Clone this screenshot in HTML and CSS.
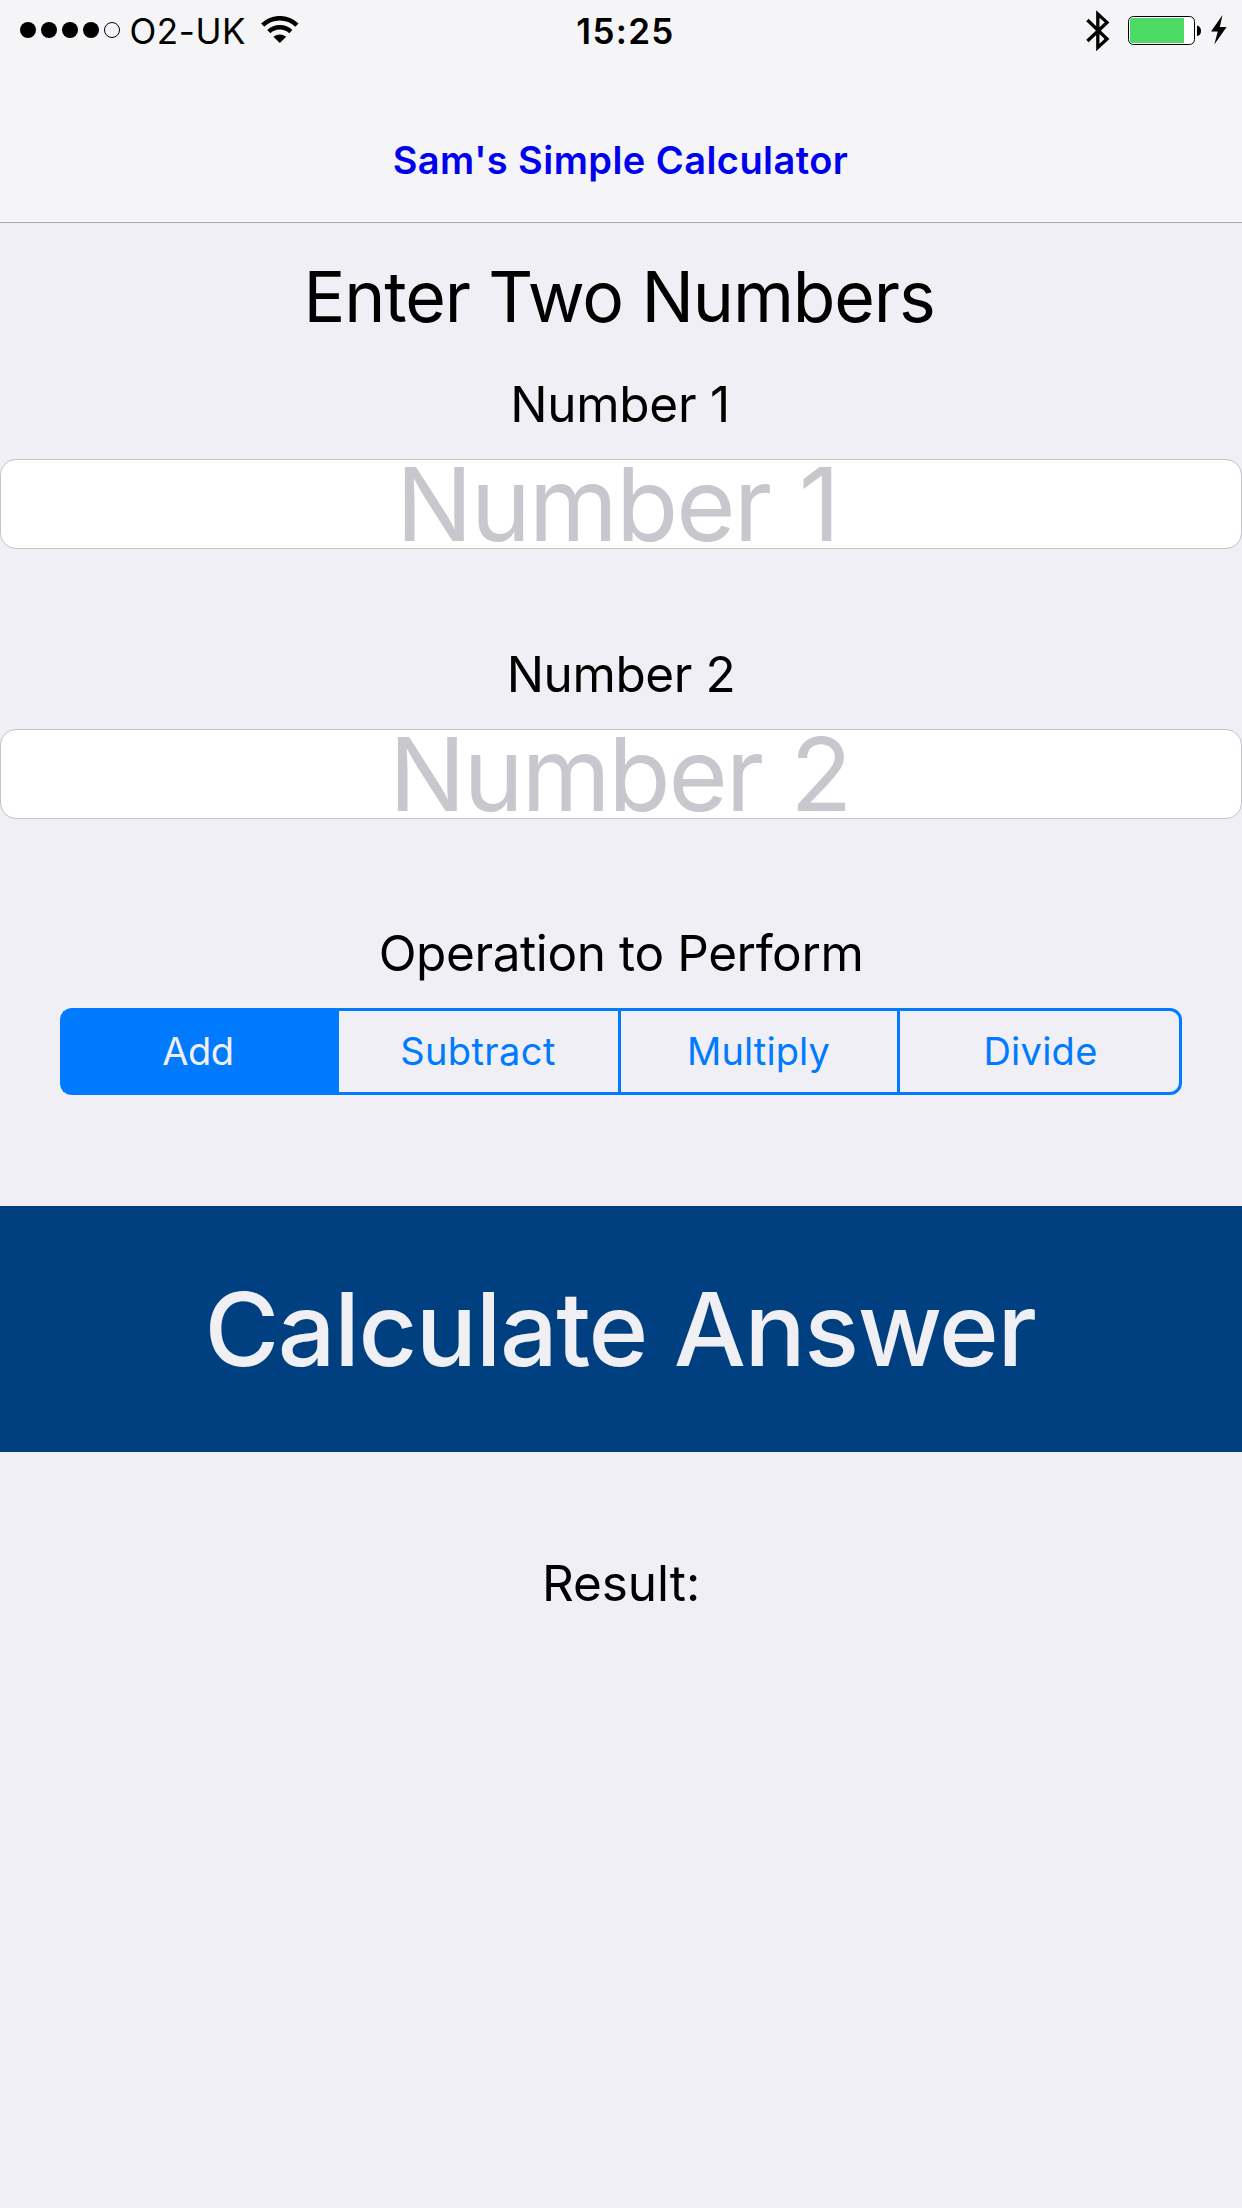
FILE: index.html
```html
<!DOCTYPE html>
<html lang="en">
<head>
  <meta charset="utf-8">
  <title>Sam's Simple Calculator</title>
  <link rel="stylesheet" href="styles.css">
</head>
<body>
  <header class="top">
    <div class="status">
      <div class="status-left">
        <span class="signal"><i></i><i></i><i></i><i></i><i class="off"></i></span>
        <span class="carrier">O2-UK</span>
        <svg class="wifi" width="38" height="28" viewBox="0 0 38 28">
          <path d="M1.700 9.200A24.500 24.500 0 0 1 35.900 9.200" fill="none" stroke="#000" stroke-width="4.600"/>
          <path d="M7.800 15.600A16 16 0 0 1 29.800 15.600" fill="none" stroke="#000" stroke-width="4.600"/>
          <path d="M18.800 27L12.400 20.700Q18.800 16.200 25.200 20.700Z"/>
        </svg>
      </div>
      <div class="time">15:25</div>
      <div class="status-right">
        <svg class="bluetooth" width="24" height="42" viewBox="0 0 24 42">
          <path d="M1.400 10L21 29L11.800 37.400V4L21 12.400L1.400 31" fill="none" stroke="#000" stroke-width="3.300"/>
        </svg>
        <svg class="battery" width="74" height="30" viewBox="0 0 74 30">
          <rect x=".5" y=".5" width="66" height="28" rx="5" fill="#fff" stroke="#000"/>
          <path d="M4.500 2H56V27H4.500Q2 27 2 24.500V4.500Q2 2 4.500 2Z" fill="#4cd964"/>
          <path d="M69 9.500Q73 10.500 73 15T69 20Z"/>
        </svg>
        <svg class="bolt" width="16" height="30" viewBox="0 0 16 30">
          <path d="M11.500 0L0 16.500H6.800L3.300 29.500L15.600 12H8.800Z"/>
        </svg>
      </div>
    </div>
    <h1 class="title">Sam's Simple Calculator</h1>
  </header>
  <main>
    <h2 class="heading">Enter Two Numbers</h2>
    <label class="label label-one" for="n1">Number 1</label>
    <input class="field field-one" id="n1" type="text" placeholder="Number 1">
    <label class="label label-two" for="n2">Number 2</label>
    <input class="field field-two" id="n2" type="text" placeholder="Number 2">
    <p class="label label-operation">Operation to Perform</p>
    <div class="segments">
      <div class="segment add">Add</div>
      <div class="segment subtract">Subtract</div>
      <div class="segment multiply">Multiply</div>
      <div class="segment divide">Divide</div>
    </div>
    <button class="calculate" type="button">Calculate Answer</button>
    <p class="label result">Result:</p>
  </main>
</body>
</html>
```
FILE: styles.css
```css
* { box-sizing: border-box; }

body {
  margin: 0;
  min-height: 2208px;
  background: #f0eff5;
  color: #000;
  font-family: Inter, "Liberation Sans", sans-serif;
}

h1, h2, p { margin: 0; font-weight: 400; }

.top {
  height: 223px;
  background: #f5f5f8;
  border-bottom: 1px solid #a9a9ae;
}

.status {
  display: grid;
  grid-template-columns: 1fr auto 1fr;
  height: 62px;
  font-size: 35px;
  line-height: 62px;
}

.status-left, .status-right { display: flex; align-items: flex-start; }
.status-left { padding-left: 20px; }
.status-right { justify-content: flex-end; padding-right: 15px; }

.signal { display: flex; gap: 5px; padding-top: 22px; }
.signal i { width: 16px; height: 16px; border-radius: 50%; background: #000; }
.signal .off { background: none; border: 1px solid #000; }

.carrier { margin-left: 9.5px; letter-spacing: .59px; }
.wifi { margin: 16px 0 0 14.500px; }
.time { margin-left: 9px; font-weight: 600; letter-spacing: 1.3px; }
.bluetooth { margin-top: 10px; }
.battery { margin: 16px 0 0 18px; }
.bolt { margin: 15px 0 0 9px; }

.title {
  padding: 75px 1px 0 0;
  color: #0000f0;
  font-size: 38px;
  font-weight: 600;
  line-height: 46px;
  letter-spacing: .44px;
  text-align: center;
}

main { display: flex; flex-direction: column; }

.heading {
  margin-top: 31px;
  padding-right: 4px;
  font-size: 69.7px;
  line-height: 85px;
  letter-spacing: -1.14px;
  text-align: center;
}

.label {
  font-size: 49.5px;
  line-height: 60px;
  letter-spacing: -.4px;
  text-align: center;
}

.label-one { margin-top: 35px; padding-right: 2px; letter-spacing: -.26px; }
.label-two { margin-top: 95px; }
.label-operation { margin-top: 104px; }
.result { margin-top: 101px; letter-spacing: -.05px; }

.field {
  width: 100%;
  height: 90px;
  margin-top: 25px;
  padding: 0 8px 0 0;
  border: 1px solid #c3c3c8;
  border-radius: 16px;
  background: #fff;
  font: 400 101.8px/88px Inter, "Liberation Sans", sans-serif;
  letter-spacing: -2px;
  word-spacing: 2px;
  text-align: center;
}

.field-two { padding-right: 3px; letter-spacing: -2.2px; }
.field::placeholder { color: #c7c7cd; opacity: 1; }

.segments {
  display: grid;
  grid-template-columns: 276px 282px 279px 279px;
  height: 87px;
  margin: 25px 60px 0;
  border: 3px solid #007aff;
  border-radius: 12px;
}

.segment {
  color: #007aff;
  font-size: 38px;
  line-height: 80px;
  text-align: center;
}

.add { padding-right: 6px; background: #007aff; color: #efeff4; letter-spacing: -.5px; }
.subtract { border-right: 3px solid #007aff; letter-spacing: .4px; padding-right: 1px; }
.multiply { padding-right: 1px; border-right: 3px solid #007aff; letter-spacing: .09px; }
.divide { padding-left: 2px; letter-spacing: .25px; }

.calculate {
  height: 246px;
  margin-top: 111px;
  padding: 0 2px 0 0;
  border: 0;
  background: #004080;
  color: #efeff4;
  font: 500 101.8px/124px Inter, "Liberation Sans", sans-serif;
  letter-spacing: -1.4px;
  word-spacing: 1px;
}
```
